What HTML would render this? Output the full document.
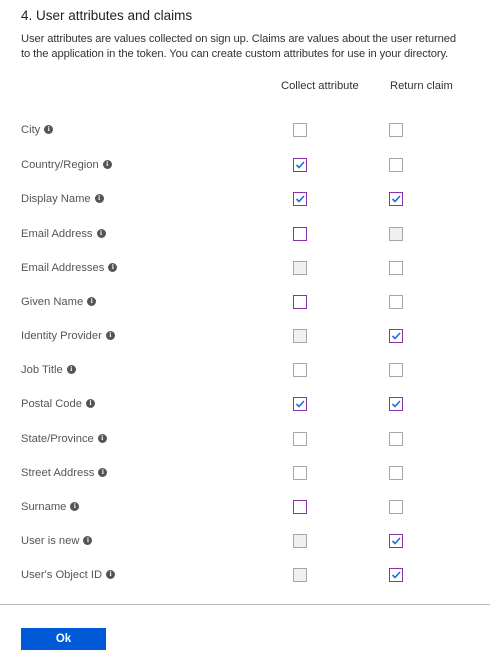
<!DOCTYPE html>
<html><head><meta charset="utf-8"><style>
body{margin:0;width:490px;height:662px;background:#fff;font-family:"Segoe UI","Liberation Sans",sans-serif;color:#333;position:relative;overflow:hidden}
.t{position:absolute;left:21px;top:8px;font-size:13.5px;color:#222}
.d{position:absolute;left:21px;top:32px;font-size:11.2px;line-height:15px;color:#333;width:468px;letter-spacing:-0.1px}
.h{position:absolute;top:80px;font-size:11.2px;color:#333}
.l{position:absolute;left:21px;font-size:11.2px;color:#555;line-height:14px;white-space:nowrap}
.i{display:inline-block;width:9px;height:9px;border-radius:50%;background:#555;color:#fff;font-size:7px;line-height:9px;text-align:center;font-weight:bold;margin-left:4px;vertical-align:middle;position:relative;top:-1px;font-family:"Liberation Serif",serif}
.c{position:absolute;width:12px;height:12px;border:1px solid #a6a6a6;background:#fff}
.c.p{border-color:#8a33a8}
.c.g{background:#f0f0f0}
.c svg{position:absolute;left:0;top:0}
hr{position:absolute;top:604px;left:0;width:490px;margin:0;border:0;border-top:1px solid #bbb}
.b{position:absolute;left:21px;top:628px;width:85px;height:22px;background:#005ad8;color:#fff;font-size:11.5px;font-weight:bold;text-align:center;line-height:22px}
</style></head><body>
<div class="t">4. User attributes and claims</div>
<div class="d">User attributes are values collected on sign up. Claims are values about the user returned<br>to the application in the token. You can create custom attributes for use in your directory.</div>
<div class="h" style="left:281px">Collect attribute</div>
<div class="h" style="left:390px">Return claim</div>
<div id="rows"></div>
<hr>
<div class="b">Ok</div>
<script>
var rows=[["City",0,0],["Country/Region",3,0],["Display Name",3,3],["Email Address",1,2],["Email Addresses",2,0],["Given Name",1,0],["Identity Provider",2,3],["Job Title",0,0],["Postal Code",3,3],["State/Province",0,0],["Street Address",0,0],["Surname",1,0],["User is new",2,3],["User's Object ID",2,3]];
var ys=[130,165,199,234,268,302,336,370,404,439,473,507,541,575];
var h="";
var chk='<svg width="12" height="12" viewBox="0 0 12 12"><path d="M2.5 6 L5 8.5 L10 3" fill="none" stroke="#1a6fe0" stroke-width="1.6"/></svg>';
function box(x,y,s){var cl="c"+(s==1||s==3?" p":"")+(s==2?" g":"");return '<div class="'+cl+'" style="left:'+x+'px;top:'+(y-7)+'px">'+(s==3?chk:"")+'</div>';}
rows.forEach(function(r,k){var y=ys[k];h+='<div class="l" style="top:'+(y-7)+'px">'+r[0].replace("'","&#39;")+'<span class="i">i</span></div>';h+=box(293,y,r[1])+box(389,y,r[2]);});
document.getElementById("rows").innerHTML=h;
</script>
</body></html>
